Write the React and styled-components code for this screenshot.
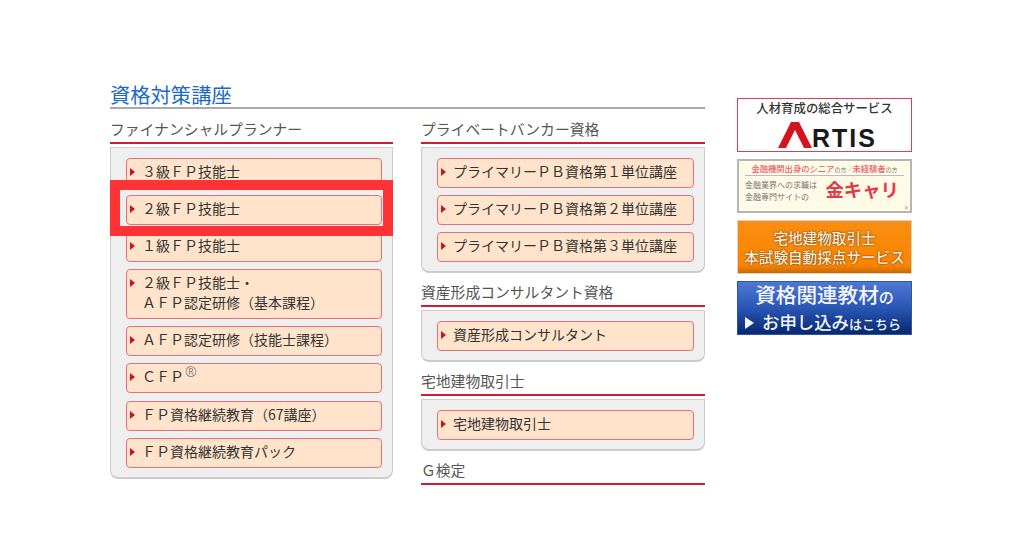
import styled, { createGlobalStyle } from "styled-components";

const GlobalStyle = createGlobalStyle`
  html, body {
    margin: 0;
    background: #ffffff;
    font-family: "Noto Sans CJK JP", "Noto Sans", sans-serif;
  }
`;

const GROUPS_RIGHT = [
  {
    title: "プライベートバンカー資格",
    items: [
      "プライマリーＰＢ資格第１単位講座",
      "プライマリーＰＢ資格第２単位講座",
      "プライマリーＰＢ資格第３単位講座",
    ],
  },
  { title: "資産形成コンサルタント資格", items: ["資産形成コンサルタント"] },
  { title: "宅地建物取引士", items: ["宅地建物取引士"] },
  { title: "Ｇ検定", items: [] },
];

export default function App() {
  return (
    <Page>
      <GlobalStyle />
      <Main>
        <Heading>資格対策講座</Heading>
        <Columns>
          <Column>
            <Section>
              <SectionTitle>ファイナンシャルプランナー</SectionTitle>
              <Panel>
                <CourseButton>３級ＦＰ技能士</CourseButton>
                <CourseButton>２級ＦＰ技能士</CourseButton>
                <CourseButton>１級ＦＰ技能士</CourseButton>
                <CourseButton>
                  ２級ＦＰ技能士・
                  <br />
                  ＡＦＰ認定研修（基本課程）
                </CourseButton>
                <CourseButton>ＡＦＰ認定研修（技能士課程）</CourseButton>
                <CourseButton>
                  ＣＦＰ<Reg>®</Reg>
                </CourseButton>
                <CourseButton>ＦＰ資格継続教育（67講座）</CourseButton>
                <CourseButton>ＦＰ資格継続教育パック</CourseButton>
                <Highlight />
              </Panel>
            </Section>
          </Column>
          <Column>
            {GROUPS_RIGHT.map((group) => (
              <Section key={group.title}>
                <SectionTitle>{group.title}</SectionTitle>
                {group.items.length > 0 && (
                  <Panel>
                    {group.items.map((item) => (
                      <CourseButton key={item}>{item}</CourseButton>
                    ))}
                  </Panel>
                )}
              </Section>
            ))}
          </Column>
        </Columns>
      </Main>
      <Aside>
        <ArtisBanner>
          <ArtisCopy>人材育成の総合サービス</ArtisCopy>
          <ArtisLogo>
            <svg width="34" height="26" viewBox="0 0 34 26">
              <polygon points="13,0 21,0 34,26 26,26 17,8 8,26 0,26" fill="#d3141f" />
            </svg>
            <ArtisName>RTIS</ArtisName>
          </ArtisLogo>
        </ArtisBanner>
        <KinBanner>
          <KinTop>
            <b>金融機関出身のシニア</b>の方／<b>未経験者</b>の方
          </KinTop>
          <KinBody>
            <KinLead>
              金融業界への求職は
              <br />
              金融専門サイトの
            </KinLead>
            <KinName>金キャリ</KinName>
          </KinBody>
          <KinMore>»</KinMore>
        </KinBanner>
        <OrangeBanner>
          宅地建物取引士
          <br />
          本試験自動採点サービス
        </OrangeBanner>
        <BlueBanner>
          <BlueLine>
            資格関連教材<small>の</small>
          </BlueLine>
          <BlueLine $second>
            <BlueArrow />
            お申し込み<small>はこちら</small>
          </BlueLine>
        </BlueBanner>
      </Aside>
    </Page>
  );
}

const Page = styled.div`
  display: flex;
  gap: 32px;
  width: 1024px;
  height: 538px;
  box-sizing: border-box;
  padding: 81px 0 0 110px;
  overflow: hidden;
`;

const Main = styled.main`
  width: 595px;
`;

const Heading = styled.h1`
  margin: 0;
  height: 26px;
  border-bottom: 2px solid #a9a9a9;
  font-size: 20.3px;
  font-weight: 400;
  line-height: 26px;
  color: #1b68c9;
`;

const Columns = styled.div`
  display: grid;
  grid-template-columns: 283px 284px;
  gap: 28px;
  margin-top: 11px;
`;

const Column = styled.div`
  display: flex;
  flex-direction: column;
  gap: 10px;
`;

const Section = styled.section``;

const SectionTitle = styled.h2`
  margin: 0;
  height: 22px;
  border-bottom: 2px solid #cf1b34;
  font-size: 14.8px;
  font-weight: 400;
  line-height: 18px;
  color: #555555;
`;

const Panel = styled.div`
  position: relative;
  display: flex;
  flex-direction: column;
  gap: 7.1px;
  margin-top: 3px;
  padding: 10px 10px 9px 15px;
  background: #efefef;
  border: 1px solid #cccccc;
  border-bottom-width: 2px;
  border-radius: 0 0 8px 8px;
`;

const CourseButton = styled.div`
  position: relative;
  box-sizing: border-box;
  padding: 2px 6px 6px 15px;
  background: #ffe4cb;
  border: 1px solid #e8707c;
  border-radius: 4px;
  font-size: 14px;
  line-height: 20px;
  color: #333333;

  &::before {
    content: "";
    position: absolute;
    left: 3px;
    top: 9px;
    border-style: solid;
    border-width: 4px 0 4px 5px;
    border-color: transparent transparent transparent #cc1126;
  }
`;

const Reg = styled.sup`
  font-family: "Noto Sans", sans-serif;
  font-size: 14px;
  font-weight: 300;
  line-height: 0;
  margin-left: 1px;
  color: #666666;
`;

// red marker laid over the screenshot, around the second button
const Highlight = styled.div`
  position: absolute;
  left: -1px;
  right: -1px;
  top: 32px;
  height: 56px;
  box-sizing: border-box;
  border: 10px solid #ff3333;
`;

const Aside = styled.aside`
  display: flex;
  flex-direction: column;
  gap: 7px;
  width: 175px;
  margin-top: 17px;
`;

const Banner = styled.div`
  box-sizing: border-box;
  width: 175px;
  height: 54px;
`;

const ArtisBanner = styled(Banner)`
  display: flex;
  flex-direction: column;
  align-items: center;
  padding-top: 1px;
  background: #ffffff;
  border: 1px solid #de3e52;
`;

const ArtisCopy = styled.div`
  font-size: 12.4px;
  line-height: 16px;
  font-weight: 500;
  color: #333333;
  white-space: nowrap;
`;

const ArtisLogo = styled.div`
  display: flex;
  align-items: flex-end;
  margin: 6px 0 0 6px;
  height: 26px;
`;

const ArtisName = styled.span`
  font-family: "Liberation Sans", sans-serif;
  font-size: 25px;
  line-height: 19px;
  font-weight: 700;
  letter-spacing: 2px;
  color: #1a1a1a;
`;

const KinBanner = styled(Banner)`
  position: relative;
  padding: 2px 6px;
  background: #fffbe6;
  border: 2px solid #b5b5b5;
`;

const KinTop = styled.div`
  padding-bottom: 0;
  border-bottom: 1px solid #bbbbbb;
  font-size: 6px;
  line-height: 11px;
  color: #777777;
  white-space: nowrap;
  text-align: center;

  b {
    font-size: 8.3px;
    font-weight: 500;
    color: #e8626a;
  }
`;

const KinBody = styled.div`
  display: flex;
  align-items: center;
  justify-content: space-between;
  margin-top: 1px;
`;

const KinLead = styled.div`
  font-size: 8px;
  line-height: 12px;
  color: #777777;
  white-space: nowrap;
`;

const KinName = styled.div`
  margin: 0 5px 4px 0;
  font-size: 18.4px;
  line-height: 24px;
  font-weight: 700;
  color: #e63946;
  white-space: nowrap;
`;

const KinMore = styled.span`
  position: absolute;
  right: 2px;
  bottom: 0;
  font-size: 8px;
  line-height: 9px;
  color: #888888;
`;

const OrangeBanner = styled(Banner)`
  display: flex;
  flex-direction: column;
  justify-content: center;
  align-items: center;
  text-align: center;
  font-size: 14.6px;
  line-height: 19px;
  font-weight: 500;
  white-space: nowrap;
  color: #f8efdc;
  text-shadow: 0 0 2px #7a3d00, 0 0 1px #7a3d00;
  background: linear-gradient(#f98e12, #fb8400 85%, #c76a08);
  border: 1px solid #d9d2c8;
`;

const BlueBanner = styled(Banner)`
  display: flex;
  flex-direction: column;
  justify-content: center;
  color: #f4f6fb;
  background: linear-gradient(#4f78d4, #2a56b4 50%, #07276f);
  border: 1px solid #2d55a8;
`;

const BlueLine = styled.div`
  display: flex;
  align-items: baseline;
  justify-content: ${(p) => (p.$second ? "flex-start" : "center")};
  padding-left: ${(p) => (p.$second ? "7px" : "0")};
  font-size: ${(p) => (p.$second ? "17.4px" : "20.6px")};
  line-height: ${(p) => (p.$second ? "23px" : "27px")};
  font-weight: 500;
  white-space: nowrap;

  small {
    font-size: ${(p) => (p.$second ? "13px" : "15px")};
  }
`;

const BlueArrow = styled.span`
  align-self: center;
  margin-right: 8px;
  border-style: solid;
  border-width: 6px 0 6px 9px;
  border-color: transparent transparent transparent #f4f6fb;
`;
